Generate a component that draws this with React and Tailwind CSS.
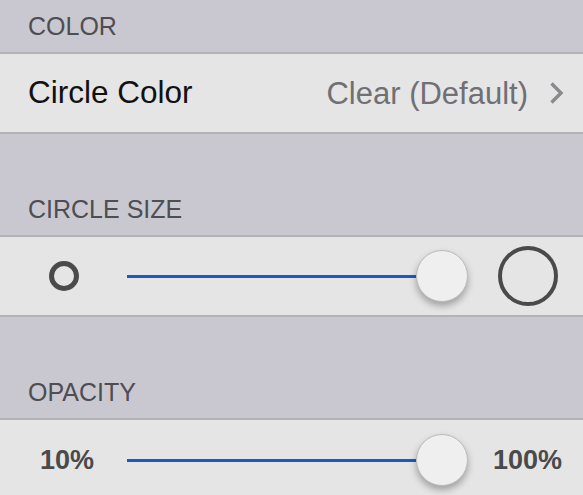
import React from "react"

const font = { fontFamily: '"Liberation Sans", Arial, sans-serif' }

const Header = ({ title, tall }) => (
    <div className={(tall ? "h-[101px]" : "h-[52px]") + " flex items-end pl-[28px] pb-[13px] text-[25px] leading-[25px] text-[#4d4d52]"}>
        {title}
    </div>
)

const Thumb = () => (
    <div className="w-[52px] h-[52px] shrink-0 rounded-full bg-[#efefef] border border-[#bcbcbc] shadow-[0_4px_7px_rgba(0,0,0,0.3)]"></div>
)

const Slider = () => (
    <div className="flex-1 flex items-center">
        <div className="flex-1 h-[3px] bg-[#1a5bc0]"></div>
        <Thumb />
    </div>
)

const App = () => {
    return (
        <div style={font} className="w-[583px] h-[495px] overflow-hidden bg-[#c9c8d0]">
            <Header title="COLOR" />
            <div className="h-[82px] flex items-center bg-[#e5e5e5] border-y-2 border-[#b2b2b7] pl-[28px] pr-[19px]">
                <span className="flex-1 text-[31.5px] leading-none text-[#111]">Circle Color</span>
                <span className="text-[31px] leading-none text-[#707074]">Clear (Default)</span>
                <svg width="15" height="24" viewBox="0 0 15 24" className="ml-[21px]">
                    <path d="M2.5 2.5 L12 12 L2.5 21.5" fill="none" stroke="#8a8a8e" strokeWidth="3.4" />
                </svg>
            </div>

            <Header title="CIRCLE SIZE" tall />
            <div className="h-[82px] flex items-center bg-[#e5e5e5] border-y-2 border-[#b2b2b7]">
                <div className="w-[127px] pl-[49px]">
                    <div className="w-[30px] h-[30px] rounded-full border-[5px] border-[#4a4a4a]"></div>
                </div>
                <Slider />
                <div className="w-[115px] pl-[30px]">
                    <div className="w-[60px] h-[60px] rounded-full border-4 border-[#4a4a4a]"></div>
                </div>
            </div>

            <Header title="OPACITY" tall />
            <div className="h-[82px] flex items-center bg-[#e5e5e5] border-t-2 border-[#b2b2b7]">
                <div className="w-[127px] pl-[40px] text-[27px] leading-none font-bold text-[#4a4a4a]">10%</div>
                <Slider />
                <div className="w-[115px] pl-[25px] text-[27px] leading-none font-bold text-[#4a4a4a]">100%</div>
            </div>
        </div>
    )
}

export default App
